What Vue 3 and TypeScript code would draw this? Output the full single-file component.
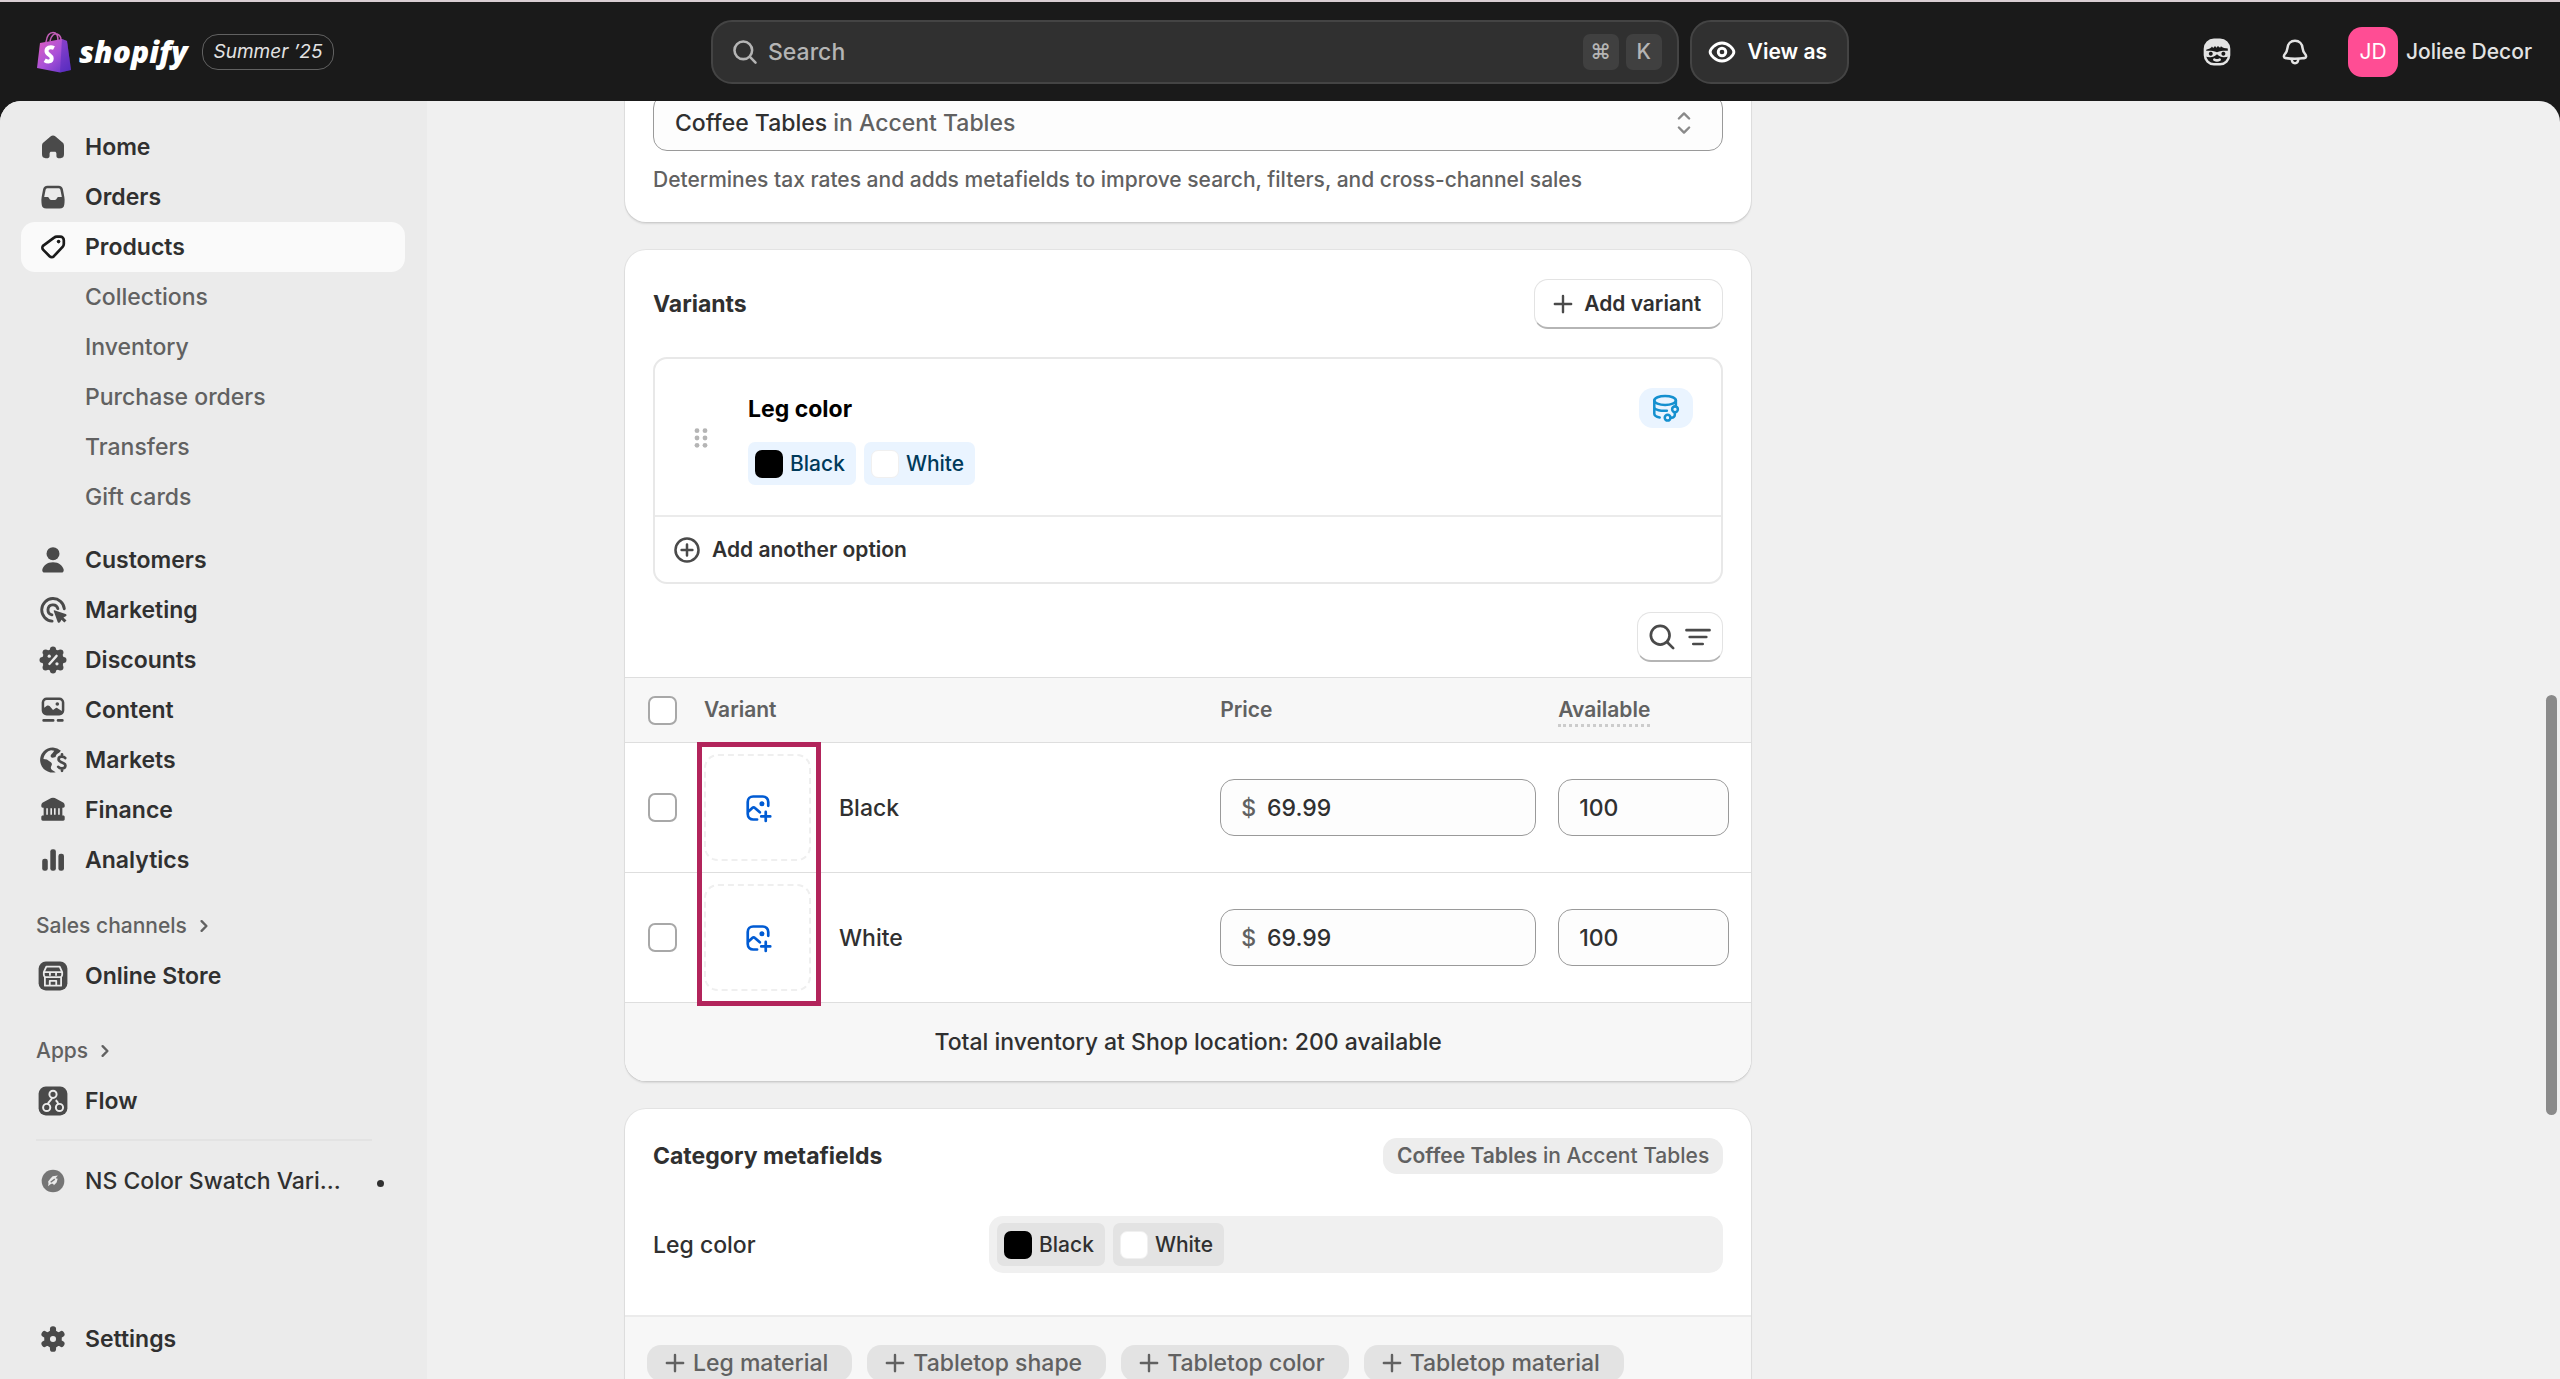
<script setup lang="ts">
import { ref } from 'vue'

interface NavItem {
  label: string
  icon: string
  active?: boolean
  children?: string[]
}

interface VariantRow {
  name: string
  price: string
  available: string
}

// Icon markup on a 20 x 20 grid
const icons: Record<string, string> = {
  home: '<path fill="currentColor" d="M8.6 4.2a2.2 2.2 0 0 1 2.8 0l3.9 3.3c.5.4.8 1 .8 1.7v5a2 2 0 0 1-2 2h-1.2a1 1 0 0 1-1-1v-1.4c0-.9-.4-1.2-1-1.2h-1.800c-.6 0-1 .3-1 1.200v1.400a1 1 0 0 1-1 1h-1.200a2 2 0 0 1-2-2v-5c0-.7.3-1.300.8-1.700z"/>',
  orders: '<path fill="currentColor" fill-rule="evenodd" d="M6.900 3.700h6.200a2.500 2.500 0 0 1 2.400 2l.8 4.300c.2 1 .2 2 .1 3l-.1 1a2.600 2.600 0 0 1-2.600 2.400H6.300A2.600 2.600 0 0 1 3.700 14l-.1-1c-.1-1-.1-2 .1-3l.8-4.300a2.500 2.500 0 0 1 2.400-2zm.1 1.400c-.6 0-1 .3-1.100.9L5.100 10h1.700c.6 0 .9.3 1.100.8.2.5.5.8 1 .8h2.200c.5 0 .8-.3 1-.8.2-.5.5-.8 1.100-.8h1.700L14.100 6c-.1-.6-.5-.9-1.100-.9z"/>',
  products: '<path fill="none" stroke="currentColor" stroke-width="1.500" stroke-linejoin="round" d="M10.600 4.800a2.300 2.300 0 0 1 1.600-.6h1.800a2 2 0 0 1 2 2v2.100c0 .7-.3 1.300-.8 1.800l-4.700 5a1.700 1.700 0 0 1-2.400 0l-3.500-3.500a1.700 1.700 0 0 1 0-2.400z"/><circle cx="13.100" cy="7" r="1" fill="currentColor"/>',
  customers: '<circle cx="10" cy="6.500" r="3.600" fill="currentColor"/><path fill="currentColor" d="M10 11.200c3.400 0 5.300 1.900 5.900 3.900.3 1-.3 1.900-1.300 1.900H5.400c-1 0-1.600-.9-1.300-1.900.6-2 2.500-3.900 5.900-3.900z"/>',
  marketing: '<g fill="none" stroke="currentColor" stroke-width="1.600" stroke-linecap="round"><path d="M16.300 9.300a6.300 6.300 0 1 0-6.800 6.900"/><path d="M12.700 9.200a2.800 2.800 0 1 0-3.300 3.500"/></g><path fill="currentColor" d="M10.700 10.100l6.300 2.100c.7.200.7 1 .1 1.300l-1.300.7 1.700 1.600-1.200 1.200-1.600-1.600-.7 1.300c-.3.600-1.200.5-1.400-.1l-2.200-6c-.1-.4.100-.6.300-.5z"/>',
  discounts: '<g fill="currentColor"><circle cx="10" cy="10" r="6"/><circle cx="10" cy="4.200" r="1.700"/><circle cx="10" cy="15.800" r="1.700"/><circle cx="4.200" cy="10" r="1.700"/><circle cx="15.800" cy="10" r="1.700"/><circle cx="5.900" cy="5.900" r="1.700"/><circle cx="14.100" cy="5.900" r="1.700"/><circle cx="5.900" cy="14.100" r="1.700"/><circle cx="14.100" cy="14.100" r="1.700"/></g><path d="M8 12.200l4-4.500" stroke="#ebebeb" stroke-width="1.300" stroke-linecap="round"/><circle cx="7.900" cy="7.900" r=".9" fill="#ebebeb"/><circle cx="12.200" cy="12.100" r=".9" fill="#ebebeb"/>',
  content: '<path fill="currentColor" fill-rule="evenodd" d="M6.500 3h7A2.800 2.800 0 0 1 16.300 5.800v4.400A2.800 2.800 0 0 1 13.500 13h-7a2.800 2.800 0 0 1-2.800-2.800V5.800A2.800 2.800 0 0 1 6.500 3zm0 1.400c-.8 0-1.400.6-1.400 1.400v3l1.500-1.100c.5-.4 1.100-.3 1.500.1L10 10l1.200-.9c.5-.4 1.100-.4 1.500 0l2.200 1.500V5.800c0-.8-.6-1.400-1.400-1.400z"/><circle cx="12.400" cy="6.700" r="1" fill="currentColor"/><path d="M4.800 15.800h5.300M12.800 15.800h2.400" stroke="currentColor" stroke-width="1.500" stroke-linecap="round"/>',
  markets: '<path fill="currentColor" d="M10 3a7 7 0 1 0 1.500 13.800l-2-1.300c-.7-.5-.9-1.300-.5-2l.3-.7c.2-.6 0-1.200-.5-1.500L6.600 9.700l-1.900-.3c.4-2.500 2-4.300 4.200-4.800l1.800.3-1 1.400c-.4.500-1 .8-1 1.500 0 .6.500 1 1.200.9l1.500-.3c.3-1.300.9-2 2-2.400l1-1.100A7 7 0 0 0 10 3z"/><path fill="none" stroke="currentColor" stroke-width="1.500" stroke-linecap="round" stroke-linejoin="round" d="M16.800 8.900c-.4-.6-1-.8-1.900-.8-1 0-1.800.6-1.800 1.500 0 2.200 3.800 1.300 3.800 3.500 0 1-.8 1.600-2 1.600-.9 0-1.600-.3-2-.9M15 7.900V6.800M15 16v-1.100"/>',
  finance: '<path fill="currentColor" d="M9 3.400a2.200 2.200 0 0 1 2 0l4.400 2.300c.7.400 1.100 1 1.100 1.700v.5c0 .5-.3.800-.8.800h-.5V13h.5c.5 0 .8.400.8.800v1.400c0 .5-.3.800-.8.800H4.300a.8.800 0 0 1-.8-.8v-1.400c0-.4.300-.8.800-.8h.5V8.700h-.5a.8.800 0 0 1-.8-.8v-.5c0-.7.4-1.300 1.100-1.700z"/><path d="M6.700 9v3.700M9 9v3.700M11 9v3.700M13.300 9v3.700" stroke="#ebebeb" stroke-width=".9"/>',
  analytics: '<g fill="currentColor"><rect x="4" y="9.300" width="3.100" height="6.700" rx="1.300"/><rect x="8.500" y="4" width="3.100" height="12" rx="1.300"/><rect x="13" y="6.500" width="3.100" height="9.500" rx="1.300"/></g>',
  store: '<rect x="2" y="2" width="16" height="16" rx="4" fill="currentColor"/><path fill="none" stroke="#ebebeb" stroke-width="1" stroke-linejoin="round" d="M6.300 4.800h7.400l1.400 3v1.500a1.500 1.500 0 0 1-.6 1.200v4.900h-9v-4.900a1.500 1.500 0 0 1-.6-1.200V7.800zM5 7.900h10M8.300 8v1.800M11.700 8v1.800M5.300 10.600h9.400M8.200 15.300v-2.600h3.600v2.600"/>',
  flow: '<rect x="2" y="2" width="16" height="16" rx="4" fill="currentColor"/><g fill="none" stroke="#ebebeb" stroke-width="1.100"><circle cx="10" cy="6.300" r="2"/><circle cx="6.500" cy="13.600" r="2"/><circle cx="13.600" cy="13.600" r="2"/><path d="M9.400 8.200c0 1.600-2 1.600-2.200 3.500M11.500 9.500c.9.600 1.200 1.200 1.400 2.200"/></g>',
  app: '<circle cx="10" cy="10" r="6.300" fill="#757575"/><path fill="#ebebeb" d="M9.800 7.400l2.900-.5-1.300 1.600 1.200.3-.6 2-1.500 1.500c-.3-.8-.9-1-1.700-.7l-1.600 1.300.3-1.400-.2-1.200 1.300-1.700z"/><path d="M8.700 10.700l2.300-1.700" stroke="#757575" stroke-width=".8"/>',
  settings: '<g fill="currentColor"><circle cx="10" cy="10" r="4.900"/><rect x="8.300" y="2.900" width="3.400" height="14.200" rx="1.600"/><rect x="8.300" y="2.900" width="3.400" height="14.200" rx="1.600" transform="rotate(60 10 10)"/><rect x="8.300" y="2.900" width="3.400" height="14.200" rx="1.600" transform="rotate(120 10 10)"/></g><circle cx="10" cy="10" r="1.700" fill="#ebebeb"/>',
  chevron: '<path fill="none" stroke="currentColor" stroke-width="1.500" stroke-linecap="round" stroke-linejoin="round" d="M8.500 7l3 3-3 3"/>',
  updown: '<path fill="none" stroke="currentColor" stroke-width="1.500" stroke-linecap="round" stroke-linejoin="round" d="M6.800 7.200L10 4l3.200 3.200M6.800 12.800L10 16l3.200-3.200"/>',
  search: '<circle cx="9" cy="9" r="5.200" fill="none" stroke="currentColor" stroke-width="1.500"/><path d="M12.900 12.900L16.200 16.200" stroke="currentColor" stroke-width="1.500" stroke-linecap="round"/>',
  filter: '<path d="M3.600 6.200h12.800M5.400 10h9.200M7.400 13.900h5.200" stroke="currentColor" stroke-width="1.500" stroke-linecap="round"/>',
  eye: '<path fill="none" stroke="currentColor" stroke-width="1.600" stroke-linejoin="round" d="M3.400 10c0-1.400 2.800-5 6.600-5s6.600 3.600 6.600 5-2.800 5-6.600 5-6.600-3.600-6.600-5z"/><circle cx="10" cy="10" r="2.100" fill="none" stroke="currentColor" stroke-width="1.600"/>',
  bell: '<path fill="none" stroke="currentColor" stroke-width="1.400" stroke-linejoin="round" d="M10 3.800c2.400 0 4 1.700 4.200 4 .2 1.700.5 2.300 1.400 3.300.9 1 .7 2.300-.5 2.300-1.500.2-3.300.3-5.100.3s-3.600-.1-5.100-.3c-1.200 0-1.400-1.300-.5-2.300.9-1 1.200-1.600 1.400-3.300.2-2.300 1.800-4 4.200-4z"/><path fill="none" stroke="currentColor" stroke-width="1.400" d="M8.200 13.900c0 1.500.7 2.300 1.800 2.300s1.800-.8 1.800-2.300"/>',
  face: '<rect x="3.300" y="3.200" width="13.400" height="13.600" rx="5" fill="none" stroke="currentColor" stroke-width="1.400"/><path fill="currentColor" d="M3.200 9c0-4 2.500-6.200 6.800-6.200S16.800 5 16.800 8c-2 .1-3.600-.3-4.600-1.200l-.5.800-1.200-.9-.8 1-.8-1-1 1.100-.7-.9C6.900 7.700 5.600 8.300 3.200 9z"/><path fill="currentColor" fill-rule="evenodd" d="M3 9.400c2.300-.2 4.500-.3 7 .7 2.500-1 4.700-.9 7-.7v2.800c-2.700 1.100-5.200.9-7-.9-1.800 1.800-4.300 2-7 .9zM6.500 9.900a1.100 1.100 0 1 0 .1 0zM13.500 9.900a1.100 1.100 0 1 0 .1 0z"/><path d="M8.500 14.200c1 .6 2 .6 3 0" fill="none" stroke="currentColor" stroke-width="1.400" stroke-linecap="round"/>',
  plus: '<path d="M10 4.900v10.200M4.900 10h10.200" stroke="currentColor" stroke-width="1.500" stroke-linecap="round"/>',
  plusCircle: '<circle cx="10" cy="10" r="6.400" fill="none" stroke="currentColor" stroke-width="1.400"/><path d="M10 7v6M7 10h6" stroke="currentColor" stroke-width="1.400" stroke-linecap="round"/>',
  drag: '<g fill="currentColor"><circle cx="7.500" cy="5.400" r="1.500"/><circle cx="12.500" cy="5.400" r="1.500"/><circle cx="7.500" cy="10" r="1.500"/><circle cx="12.500" cy="10" r="1.500"/><circle cx="7.500" cy="14.600" r="1.500"/><circle cx="12.500" cy="14.600" r="1.500"/></g>',
  database: '<g fill="none" stroke="currentColor" stroke-width="1.400" stroke-linecap="round"><ellipse cx="9.500" cy="5.800" rx="6" ry="2.500"/><path d="M3.500 5.800v7.400c0 .9 1 1.700 3 2.100M3.500 9.800c.5 1.200 3.500 2 7 1.700M15.500 5.800v2.500"/><circle cx="15" cy="10.700" r="1.600"/><circle cx="10.900" cy="15.400" r="1.600"/><path d="M12.500 15.400h.7a1.700 1.700 0 0 0 1.700-1.700v-1.400"/></g>',
  imageAdd: '<g fill="none" stroke="currentColor" stroke-width="1.500" stroke-linecap="round" stroke-linejoin="round"><path d="M15.700 8.800V6.600a3 3 0 0 0-3-3H7.300a3 3 0 0 0-3 3v6.800a3 3 0 0 0 3 3h2.200M4.400 12.300l2.400-2.300c.5-.5 1-.5 1.500 0l2.700 2.400M14.300 12.200v5M11.800 14.700h5"/></g><circle cx="12.200" cy="7.600" r="1.400" fill="currentColor"/>',
}

const mainNav: NavItem[] = [
  { label: 'Home', icon: 'home' },
  { label: 'Orders', icon: 'orders' },
  {
    label: 'Products',
    icon: 'products',
    active: true,
    children: ['Collections', 'Inventory', 'Purchase orders', 'Transfers', 'Gift cards'],
  },
  { label: 'Customers', icon: 'customers' },
  { label: 'Marketing', icon: 'marketing' },
  { label: 'Discounts', icon: 'discounts' },
  { label: 'Content', icon: 'content' },
  { label: 'Markets', icon: 'markets' },
  { label: 'Finance', icon: 'finance' },
  { label: 'Analytics', icon: 'analytics' },
]

const colors = ['Black', 'White']
const metafields = ['Leg material', 'Tabletop shape', 'Tabletop color', 'Tabletop material']

const query = ref('')
const rows = ref<VariantRow[]>([
  { name: 'Black', price: '69.99', available: '100' },
  { name: 'White', price: '69.99', available: '100' },
])
</script>

<template>
  <div class="app">
    <header class="topbar">
      <div class="brand">
        <svg class="bag" viewBox="0 0 36 42" aria-hidden="true">
          <defs>
            <linearGradient id="bagFill" x1="0" y1="0" x2="1" y2="1">
              <stop offset="0" stop-color="#e05fc0" />
              <stop offset="0.500" stop-color="#a951d8" />
              <stop offset="1" stop-color="#5a2fc4" />
            </linearGradient>
          </defs>
          <path d="M10 11C11 4 14 1.500 17 1.500s5 3 5 8M14 10c1-5 4-8 7-7s4 4 4 6" fill="none" stroke="#c45fb8" stroke-width="1.500" />
          <path d="M4 12l22-4 5 2 4 29-11 2.500L1 37z" fill="url(#bagFill)" />
          <path d="M26 8l5 2 4 29-11 2.500z" fill="#4b25b8" opacity="0.450" />
          <path d="M18 17c-4-2-7.500 0-7.500 3 0 3.800 5.200 4 5.200 7.300 0 3.700-4 3.900-7 2" fill="none" stroke="#fff" stroke-width="4" />
        </svg>
        <span class="wordmark">shopify</span>
        <span class="edition">Summer ’25</span>
      </div>
      <div class="search-area">
        <label class="search">
          <svg class="icon" viewBox="0 0 20 20" v-html="icons.search"></svg>
          <input v-model="query" type="text" placeholder="Search" aria-label="Search" />
          <kbd>⌘</kbd>
          <kbd>K</kbd>
        </label>
        <button class="view-as" type="button">
          <svg class="icon" viewBox="0 0 20 20" v-html="icons.eye"></svg>
          View as
        </button>
      </div>
      <div class="account">
        <button class="icon-btn" type="button" aria-label="Sidekick">
          <svg class="icon" viewBox="0 0 20 20" v-html="icons.face"></svg>
        </button>
        <button class="icon-btn" type="button" aria-label="Notifications">
          <svg class="icon" viewBox="0 0 20 20" v-html="icons.bell"></svg>
        </button>
        <button class="profile" type="button">
          <span class="avatar">JD</span>
          Joliee Decor
        </button>
      </div>
    </header>

    <div class="frame">
      <nav class="sidebar" aria-label="Main">
        <template v-for="item in mainNav" :key="item.label">
          <a class="nav-row" :class="{ active: item.active }" href="#">
            <svg class="icon" viewBox="0 0 20 20" v-html="icons[item.icon]"></svg>
            <span>{{ item.label }}</span>
          </a>
          <div v-if="item.children" class="children">
            <a v-for="child in item.children" :key="child" class="nav-row child" href="#">{{ child }}</a>
          </div>
        </template>

        <a class="section" href="#">
          Sales channels
          <svg class="icon" viewBox="0 0 20 20" v-html="icons.chevron"></svg>
        </a>
        <a class="nav-row" href="#">
          <svg class="icon" viewBox="0 0 20 20" v-html="icons.store"></svg>
          <span>Online Store</span>
        </a>

        <a class="section" href="#">
          Apps
          <svg class="icon" viewBox="0 0 20 20" v-html="icons.chevron"></svg>
        </a>
        <a class="nav-row" href="#">
          <svg class="icon" viewBox="0 0 20 20" v-html="icons.flow"></svg>
          <span>Flow</span>
        </a>
        <hr />
        <a class="nav-row pinned" href="#">
          <svg class="icon" viewBox="0 0 20 20" v-html="icons.app"></svg>
          <span class="pinned-name">NS Color Swatch Vari...</span>
          <span class="dot"></span>
        </a>

        <a class="nav-row last" href="#">
          <svg class="icon" viewBox="0 0 20 20" v-html="icons.settings"></svg>
          <span>Settings</span>
        </a>
      </nav>

      <main class="main">
        <div class="page">
          <div class="primary">
            <section class="card category">
              <button class="select" type="button" aria-haspopup="listbox">
                <span>Coffee Tables <span class="muted">in Accent Tables</span></span>
                <svg class="icon small" viewBox="0 0 20 20" v-html="icons.updown"></svg>
              </button>
              <p class="help">
                Determines tax rates and adds metafields to improve search, filters, and cross-channel sales
              </p>
            </section>

            <section class="card">
              <div class="card-head">
                <h2>Variants</h2>
                <button class="btn" type="button">
                  <svg class="icon small" viewBox="0 0 20 20" v-html="icons.plus"></svg>
                  Add variant
                </button>
              </div>

              <div class="options">
                <div class="option">
                  <svg class="icon drag" viewBox="0 0 20 20" v-html="icons.drag"></svg>
                  <div class="option-body">
                    <h3>Leg color</h3>
                    <div class="tags">
                      <span v-for="c in colors" :key="c" class="tag info">
                        <i class="swatch" :class="c.toLowerCase()"></i>{{ c }}
                      </span>
                    </div>
                  </div>
                  <span class="linked">
                    <svg class="icon" viewBox="0 0 20 20" v-html="icons.database"></svg>
                  </span>
                </div>
                <button class="add-option" type="button">
                  <svg class="icon" viewBox="0 0 20 20" v-html="icons.plusCircle"></svg>
                  Add another option
                </button>
              </div>

              <div class="toolbar">
                <button class="btn tools" type="button" aria-label="Search and filter">
                  <svg class="icon" viewBox="0 0 20 20" v-html="icons.search"></svg>
                  <svg class="icon" viewBox="0 0 20 20" v-html="icons.filter"></svg>
                </button>
              </div>

              <div class="table-wrap">
                <table>
                  <colgroup>
                    <col class="c-check" />
                    <col />
                    <col class="c-price" />
                    <col class="c-avail" />
                  </colgroup>
                  <thead>
                    <tr>
                      <th class="check"><input type="checkbox" aria-label="Select all variants" /></th>
                      <th>Variant</th>
                      <th>Price</th>
                      <th><span class="dotted">Available</span></th>
                    </tr>
                  </thead>
                  <tbody>
                    <tr v-for="row in rows" :key="row.name">
                      <td class="check"><input type="checkbox" :aria-label="'Select ' + row.name" /></td>
                      <td>
                        <div class="variant">
                          <button class="thumb" type="button" :aria-label="'Add image for ' + row.name">
                            <svg class="icon" viewBox="0 0 20 20" v-html="icons.imageAdd"></svg>
                          </button>
                          <span>{{ row.name }}</span>
                        </div>
                      </td>
                      <td>
                        <label class="field price">
                          <span class="prefix">$</span>
                          <input v-model="row.price" type="text" :aria-label="'Price of ' + row.name" />
                        </label>
                      </td>
                      <td>
                        <label class="field">
                          <input v-model="row.available" type="text" :aria-label="'Available ' + row.name" />
                        </label>
                      </td>
                    </tr>
                  </tbody>
                </table>
                <div class="highlight"></div>
              </div>
              <p class="total">Total inventory at Shop location: 200 available</p>
            </section>

            <section class="card">
              <div class="card-head meta-head">
                <h2>Category metafields</h2>
                <span class="badge"><b>Coffee Tables</b> in Accent Tables</span>
              </div>
              <div class="meta-row">
                <span class="meta-label">Leg color</span>
                <div class="meta-value">
                  <span v-for="c in colors" :key="c" class="tag">
                    <i class="swatch" :class="c.toLowerCase()"></i>{{ c }}
                  </span>
                </div>
              </div>
              <div class="suggestions">
                <button v-for="m in metafields" :key="m" class="chip" type="button">
                  <svg class="icon small" viewBox="0 0 20 20" v-html="icons.plus"></svg>
                  {{ m }}
                </button>
              </div>
            </section>
          </div>
        </div>
        <div class="scrollbar"></div>
      </main>
    </div>
  </div>
</template>

<style>
body {
  margin: 0;
  background: #1a1a1a;
}
</style>

<style scoped>
.app {
  display: flex;
  flex-direction: column;
  height: 100vh;
  overflow: hidden;
  background: #1a1a1a;
  color: #303030;
  font-family: Inter, 'Liberation Sans', sans-serif;
  font-size: 23px;
  font-weight: 450;
  line-height: 36px;
}
.app *,
.app *::before {
  box-sizing: border-box;
}
button,
input {
  margin: 0;
  padding: 0;
  border: 0;
  background: none;
  color: inherit;
  font: inherit;
}
a {
  color: inherit;
  text-decoration: none;
}
h2,
h3,
p {
  margin: 0;
}
h2,
h3 {
  font-size: 23px;
  font-weight: 650;
}
.icon {
  display: block;
  flex: none;
  width: 36px;
  height: 36px;
}
.icon.small {
  width: 32px;
  height: 32px;
}

/* Top bar */
.topbar {
  display: grid;
  grid-template-columns: 1fr 1138px 1fr;
  align-items: center;
  flex: none;
  height: 101px;
  border-top: 2px solid #d9ced3;
  color: #e3e3e3;
}
.brand {
  display: flex;
  align-items: center;
  padding-left: 36px;
}
.bag {
  width: 36px;
  height: 42px;
}
.wordmark {
  margin-left: 7px;
  color: #fff;
  font: italic 800 30px/42px 'Open Sans', sans-serif;
}
.edition {
  margin-left: 14px;
  padding: 0 11px;
  border: 1px solid #616161;
  border-radius: 16px;
  font-size: 19px;
  font-style: italic;
  line-height: 34px;
}
.search-area {
  display: flex;
  gap: 11px;
}
.search {
  display: flex;
  flex: 1;
  align-items: center;
  height: 64px;
  padding: 0 15px;
  border: 2px solid #444;
  border-radius: 21px;
  background: #303030;
  color: #b5b5b5;
}
.search .icon {
  width: 34px;
  height: 34px;
}
.search input {
  flex: 1;
  min-width: 0;
  margin-left: 6px;
  outline: 0;
}
.search input::placeholder {
  color: #b5b5b5;
  opacity: 1;
}
kbd {
  width: 36px;
  margin-left: 7px;
  border-radius: 7px;
  background: #404040;
  font: 450 21px/36px Inter, 'DejaVu Sans', sans-serif;
  text-align: center;
}
.view-as {
  display: flex;
  align-items: center;
  gap: 8px;
  padding: 0 20px 0 12px;
  border: 2px solid #444;
  border-radius: 21px;
  background: #303030;
  color: #fff;
  font-size: 21px;
  font-weight: 600;
}
.account {
  display: flex;
  align-items: center;
  justify-content: flex-end;
  gap: 42px;
  padding-right: 28px;
}
.profile {
  display: flex;
  align-items: center;
  gap: 8px;
  margin-left: -7px;
  font-size: 21px;
  font-weight: 550;
}
.avatar {
  width: 50px;
  border-radius: 14px;
  background: #ff4d94;
  color: #fff;
  font-weight: 400;
  line-height: 50px;
  text-align: center;
}

/* Frame */
.frame {
  display: flex;
  flex: 1;
  min-height: 0;
  overflow: hidden;
  border-radius: 21px 21px 0 0;
  background: #f0f0f0;
}
.sidebar {
  display: flex;
  flex: none;
  flex-direction: column;
  width: 427px;
  padding: 21px 22px 15px 21px;
  background: #ebebeb;
}
.nav-row {
  display: flex;
  flex: none;
  align-items: center;
  gap: 14px;
  height: 50px;
  padding: 0 14px;
  border-radius: 14px;
  font-weight: 600;
}
.nav-row .icon {
  color: #4a4a4a;
}
.nav-row.active {
  background: #fafafa;
}
.nav-row.active .icon {
  color: #1a1a1a;
}
.children {
  margin-bottom: 13px;
}
.nav-row.child {
  padding-left: 64px;
  color: #616161;
  font-weight: 450;
}
.section {
  display: flex;
  flex: none;
  align-items: center;
  gap: 1px;
  height: 50px;
  margin-top: 16px;
  padding-left: 15px;
  color: #616161;
  font-size: 21px;
  font-weight: 550;
}
.nav-row + .section ~ .section {
  margin-top: 25px;
}
.section .icon {
  width: 32px;
  height: 32px;
}
hr {
  flex: none;
  width: 336px;
  height: 2px;
  margin: 13px 0 15px 15px;
  border: 0;
  background: #e3e3e3;
}
.pinned-name {
  flex: 1;
  font-weight: 550;
  white-space: nowrap;
}
.pinned .dot {
  width: 7px;
  height: 7px;
  margin: 4px 7px 0 0;
  border-radius: 50%;
  background: #303030;
}
.last {
  margin-top: auto;
}

/* Page */
.main {
  position: relative;
  flex: 1;
  min-width: 0;
  overflow: hidden;
}
.page {
  display: grid;
  grid-template-columns: minmax(0, 659fr) minmax(0, 341fr);
  column-gap: 28px;
  max-width: 1737px;
  margin: -35px auto 0;
}
.primary {
  display: flex;
  flex-direction: column;
  gap: 28px;
}
.card {
  overflow: hidden;
  border-radius: 21px;
  background: #fff;
  box-shadow: 0 2px 2px rgba(0, 0, 0, 0.1), 0 0 0 1px rgba(0, 0, 0, 0.05);
}
.category {
  padding: 28px 28px 24px;
}
.select {
  display: flex;
  align-items: center;
  justify-content: space-between;
  width: 100%;
  height: 57px;
  padding: 0 22px 0 21px;
  border: 1px solid #9a9a9a;
  border-radius: 14px;
  background: #fdfdfd;
}
.select > .icon {
  color: #8a8a8a;
}
.muted {
  color: #616161;
}
.help {
  padding-top: 11px;
  color: #616161;
  font-size: 21px;
  font-weight: 500;
}
.card-head {
  display: flex;
  align-items: center;
  justify-content: space-between;
  padding: 29px 28px 0;
}
.btn {
  display: flex;
  align-items: center;
  height: 50px;
  padding: 0 21px 0 12px;
  border: 1px solid #e3e3e3;
  border-bottom: 2px solid #b5b5b5;
  border-radius: 14px;
  background: #fff;
  font-size: 21px;
  font-weight: 600;
}
.btn .icon,
.add-option .icon {
  color: #4a4a4a;
}
.btn .small {
  margin-right: 5px;
}
.options {
  margin: 28px 28px 0;
  border: 2px solid #e8e8e8;
  border-radius: 14px;
}
.option {
  display: flex;
  align-items: flex-start;
  height: 158px;
  padding: 29px 28px 28px;
  border-bottom: 2px solid #ebebeb;
}
.drag {
  align-self: center;
  width: 32px;
  height: 32px;
  margin: 0 31px 0 2px;
  color: #b5b5b5;
}
.option-body {
  flex: 1;
  padding-top: 3px;
}
h3 {
  color: #000;
}
.tags {
  display: flex;
  gap: 8px;
  margin-top: 15px;
}
.tag {
  display: flex;
  align-items: center;
  height: 43px;
  padding: 0 11px 0 7px;
  border-radius: 7px;
  background: #e3e3e3;
  color: #303030;
  font-size: 21px;
}
.tag.info {
  background: #eaf4ff;
  color: #003a5a;
}
.swatch {
  width: 28px;
  height: 28px;
  margin-right: 7px;
  border-radius: 7px;
}
.swatch.black {
  background: #000;
}
.swatch.white {
  border: 1px solid #f0f0f0;
  background: #fff;
}
.linked {
  display: flex;
  align-items: center;
  justify-content: center;
  width: 54px;
  height: 40px;
  border-radius: 14px;
  background: #eaf4ff;
  color: #1590cf;
}
.add-option {
  display: flex;
  align-items: center;
  gap: 7px;
  width: 100%;
  height: 65px;
  padding-left: 14px;
  font-size: 21px;
  font-weight: 600;
}
.toolbar {
  display: flex;
  justify-content: flex-end;
  padding: 28px 28px 15px;
}
.tools {
  padding: 0 6px;
}

/* Variant table */
.table-wrap {
  position: relative;
}
table {
  width: 100%;
  border-collapse: collapse;
  table-layout: fixed;
}
.c-check {
  width: 79px;
}
.c-price {
  width: 338px;
}
.c-avail {
  width: 193px;
}
th,
td {
  padding: 0;
  border-bottom: 1px solid #dedede;
  text-align: left;
}
th {
  height: 65px;
  border-top: 1px solid #dedede;
  background: #f7f7f7;
  color: #616161;
  font-size: 21px;
  font-weight: 600;
}
td {
  height: 130px;
}
.check {
  padding-left: 23px;
}
.check input {
  display: block;
  width: 29px;
  height: 29px;
  border: 2px solid #a8a8a8;
  border-radius: 7px;
  background: #fff;
  appearance: none;
}
.dotted {
  display: inline-block;
  border-bottom: 3px dotted #ccc;
  line-height: 28px;
}
.variant {
  display: flex;
  align-items: center;
  gap: 28px;
}
.thumb {
  display: flex;
  align-items: center;
  justify-content: center;
  width: 107px;
  height: 107px;
  border: 2px dashed #efefef;
  border-radius: 14px;
  color: #005bd3;
}
.thumb .icon {
  width: 36px;
  height: 36px;
}
.field {
  display: flex;
  align-items: center;
  height: 57px;
  margin-right: 22px;
  padding: 0 20px;
  border: 1px solid #9a9a9a;
  border-radius: 14px;
  background: #fdfdfd;
}
.prefix {
  margin-right: 11px;
  color: #616161;
}
.field input {
  width: 100%;
  min-width: 0;
  outline: 0;
}
.highlight {
  position: absolute;
  top: 65px;
  bottom: -3px;
  left: 72px;
  width: 124px;
  border: 5px solid #b2245b;
  pointer-events: none;
}
.total {
  background: #f7f7f7;
  line-height: 78px;
  text-align: center;
}

/* Category metafields */
.badge {
  padding: 0 14px;
  border-radius: 14px;
  background: #ededed;
  color: #616161;
  font-size: 21px;
  font-weight: 500;
}
.badge b {
  font-weight: 600;
}
.meta-row {
  display: flex;
  align-items: center;
  padding: 42px 28px;
}
.meta-label {
  width: 336px;
}
.meta-value {
  display: flex;
  flex: 1;
  align-items: center;
  gap: 8px;
  height: 57px;
  padding: 0 8px;
  border-radius: 14px;
  background: #f0f0f0;
}
.suggestions {
  display: flex;
  gap: 15px;
  padding: 28px 22px;
  border-top: 2px solid #ebebeb;
  background: #f7f7f7;
}
.chip {
  display: flex;
  align-items: center;
  padding: 0 24px 0 12px;
  border-radius: 14px;
  background: #e3e3e3;
  color: #616161;
}
.chip .icon {
  margin-right: 2px;
}
.scrollbar {
  position: absolute;
  top: 594px;
  right: 3px;
  width: 11px;
  height: 420px;
  border-radius: 6px;
  background: #8a8a8a;
}
</style>
